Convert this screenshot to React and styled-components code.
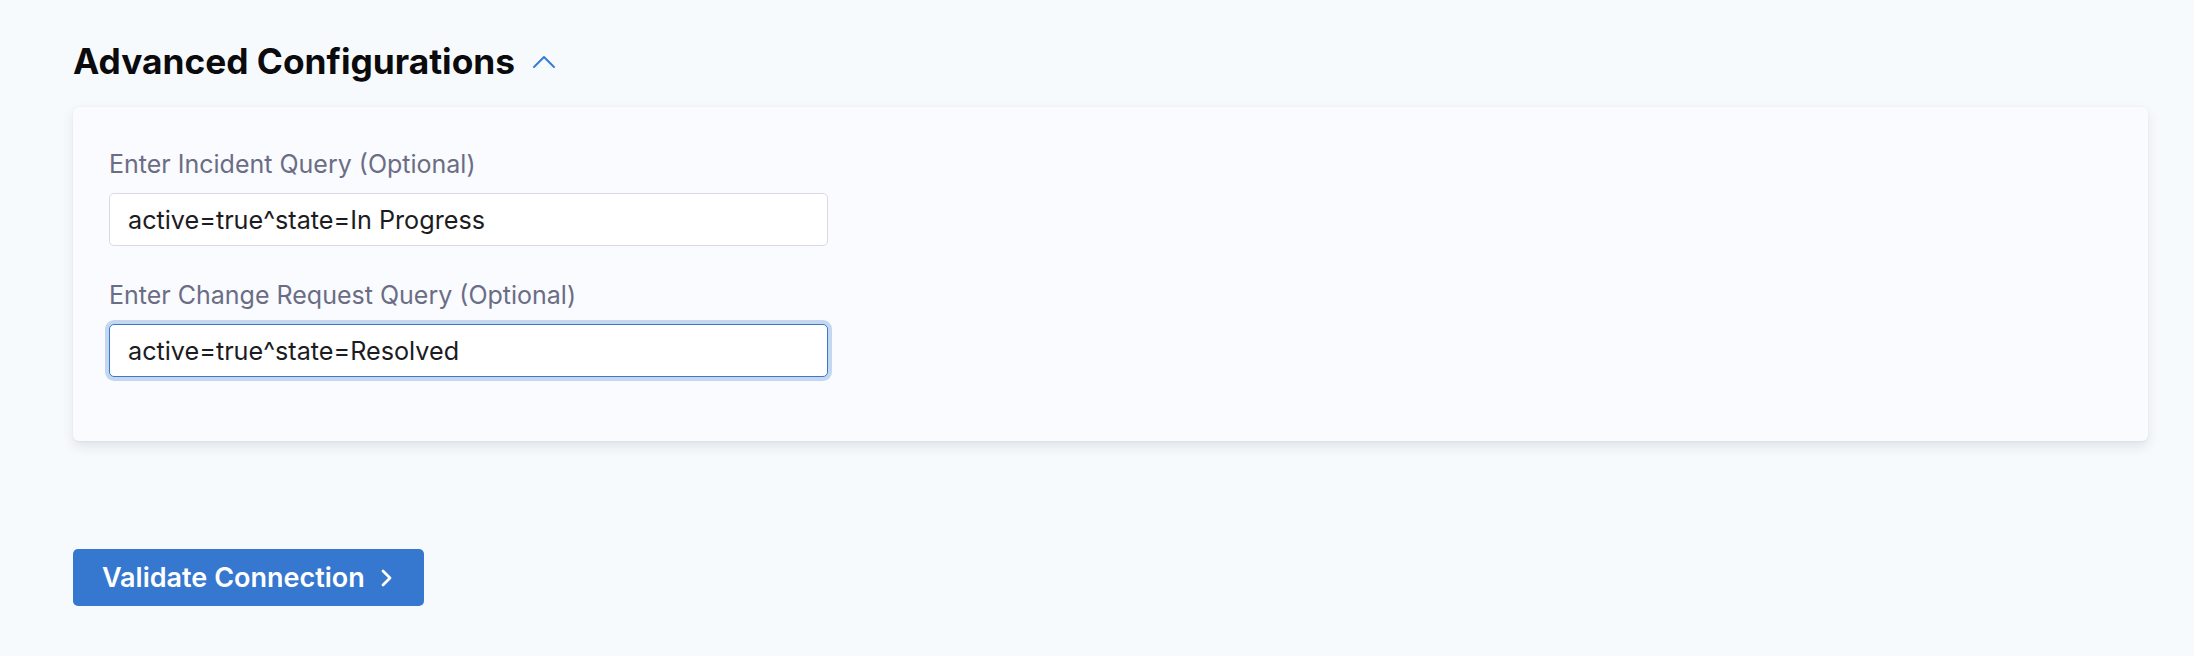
import React from 'react';
import styled, { createGlobalStyle } from 'styled-components';

const GlobalStyle = createGlobalStyle`
  html, body {
    margin: 0;
    padding: 0;
    background: #f7fafd;
    font-family: Inter, "Noto Sans", sans-serif;
  }
`;

const Page = styled.div`
  padding: 28px 46px 40px 73px;
`;

const SectionHeader = styled.div`
  display: flex;
  align-items: center;
  gap: 17px;
  height: 66px;
  margin-bottom: 12px;
`;

const Title = styled.h2`
  margin: 0;
  font-size: 35.3px;
  font-weight: 700;
  color: #0b0b0d;
`;

const ToggleIcon = styled.span`
  display: inline-flex;
  color: #3a7ad4;
  margin-top: 2px;
`;

const Card = styled.div`
  background: #f9fbfe;
  border-radius: 6px;
  border-top: 1px solid #eff2f6;
  box-shadow: 0 6px 12px rgba(40, 50, 70, 0.1), 0 1px 2px rgba(40, 50, 70, 0.05);
  padding: 42px 36px 64px;
  display: flex;
  flex-direction: column;
  gap: 34px;
`;

const Field = styled.div`
  display: flex;
  flex-direction: column;
  gap: 14px;
`;

const Label = styled.label`
  font-size: 25px;
  line-height: 30px;
  color: #6b6d85;
`;

const Input = styled.input`
  box-sizing: border-box;
  width: 719px;
  height: 53px;
  padding: 0 18px;
  font-family: Inter, "Noto Sans", sans-serif;
  font-size: 25.2px;
  color: #1c1c22;
  background: #ffffff;
  border: 1.5px solid ${props => (props.focused ? '#3a78cc' : '#d9dae5')};
  border-radius: 5px;
  outline: none;
  box-shadow: ${props => (props.focused ? '0 0 0 4px #c3d7f1' : 'none')};
`;

const Actions = styled.div`
  margin-top: 108px;
`;

const PrimaryButton = styled.button`
  display: inline-flex;
  align-items: center;
  gap: 15px;
  height: 57px;
  padding: 0 32px 0 29px;
  background: #3677d0;
  color: #ffffff;
  border: none;
  border-radius: 5px;
  font-family: Inter, "Noto Sans", sans-serif;
  font-size: 27px;
  font-weight: 600;
  cursor: pointer;
`;

const ChevronUp = () => (
  <svg width="24" height="14" viewBox="0 0 24 14" fill="none">
    <path d="M2 12L12 2l10 10" stroke="currentColor" strokeWidth="2" strokeLinecap="round" strokeLinejoin="round" />
  </svg>
);

const ChevronRight = () => (
  <svg width="12" height="18" viewBox="0 0 12 18" fill="none">
    <path d="M3 2l7 7-7 7" stroke="currentColor" strokeWidth="2.8" strokeLinecap="round" strokeLinejoin="round" />
  </svg>
);

export default function App() {
  return (
    <>
      <GlobalStyle />
      <Page>
        <SectionHeader>
          <Title>Advanced Configurations</Title>
          <ToggleIcon>
            <ChevronUp />
          </ToggleIcon>
        </SectionHeader>
        <Card>
          <Field>
            <Label>Enter Incident Query (Optional)</Label>
            <Input readOnly value="active=true^state=In Progress" />
          </Field>
          <Field>
            <Label>Enter Change Request Query (Optional)</Label>
            <Input readOnly focused value="active=true^state=Resolved" />
          </Field>
        </Card>
        <Actions>
          <PrimaryButton>
            Validate Connection
            <ChevronRight />
          </PrimaryButton>
        </Actions>
      </Page>
    </>
  );
}
